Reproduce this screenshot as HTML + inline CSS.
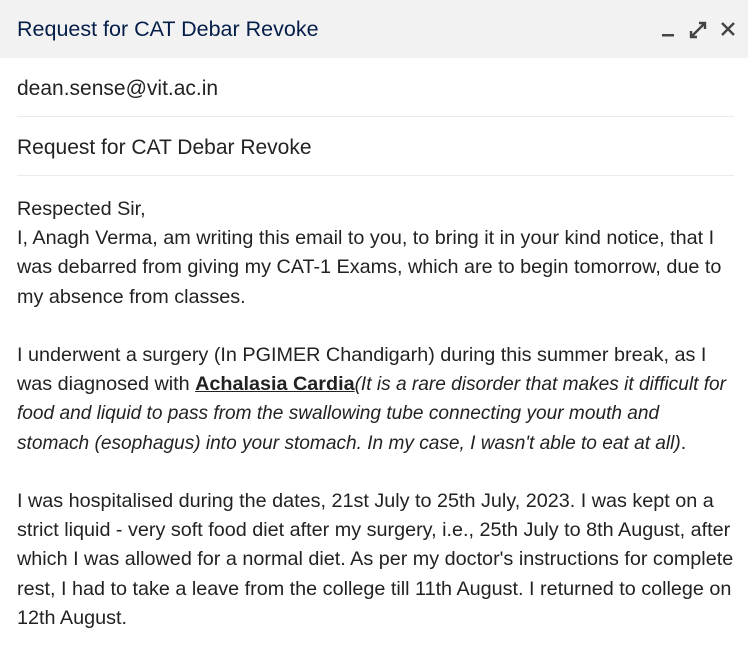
<!DOCTYPE html>
<html><head><style>
body{margin:0;width:748px;height:651px;overflow:hidden;background:#fff;font-family:"Liberation Sans",Arial,sans-serif;}
.hd{height:58px;background:#f2f2f2;position:relative;}
.hd .t{position:absolute;left:17px;top:17px;font-size:21.5px;color:#041e49;}
.ic{position:absolute;top:20px;}
.row{margin:0 0 0 17px;width:717px;height:59px;border-bottom:1px solid #e8ebef;box-sizing:border-box;font-size:21px;color:#222;line-height:62px;}
.body{padding:19px 0 0 17px;font-size:19.8px;line-height:29.2px;color:#222;white-space:nowrap;}
i{font-size:19.1px;}
a{color:#222;font-weight:bold;text-decoration:underline;}
</style></head><body>
<div class="hd"><div class="t">Request for CAT Debar Revoke</div>
<svg class="ic" style="left:660px" width="16" height="20"><rect x="2" y="14" width="12" height="2.5" fill="#444"/></svg>
<svg class="ic" style="left:688px" width="20" height="20"><path d="M3 17L17 3M11 3h6v6M3 11v6h6" stroke="#444" stroke-width="2.4" fill="none"/></svg>
<svg class="ic" style="left:719px" width="18" height="20"><path d="M3 3L15 15M15 3L3 15" stroke="#444" stroke-width="2.4"/></svg>
</div>
<div class="row">dean.sense@vit.ac.in</div>
<div class="row">Request for CAT Debar Revoke</div>
<div class="body">
Respected Sir,<br>
I, Anagh Verma, am writing this email to you, to bring it in your kind notice, that I<br>
was debarred from giving my CAT-1 Exams, which are to begin tomorrow, due to<br>
my absence from classes.<br><br>
I underwent a surgery (In PGIMER Chandigarh) during this summer break, as I<br>
was diagnosed with <a>Achalasia Cardia</a><i>(It is a rare disorder that makes it difficult for<br>
food and liquid to pass from the swallowing tube connecting your mouth and<br>
stomach (esophagus) into your stomach. In my case, I wasn't able to eat at all)</i>.<br><br>
I was hospitalised during the dates, 21st July to 25th July, 2023. I was kept on a<br>
strict liquid - very soft food diet after my surgery, i.e., 25th July to 8th August, after<br>
which I was allowed for a normal diet. As per my doctor's instructions for complete<br>
rest, I had to take a leave from the college till 11th August. I returned to college on<br>
12th August.
</div>
</body></html>
